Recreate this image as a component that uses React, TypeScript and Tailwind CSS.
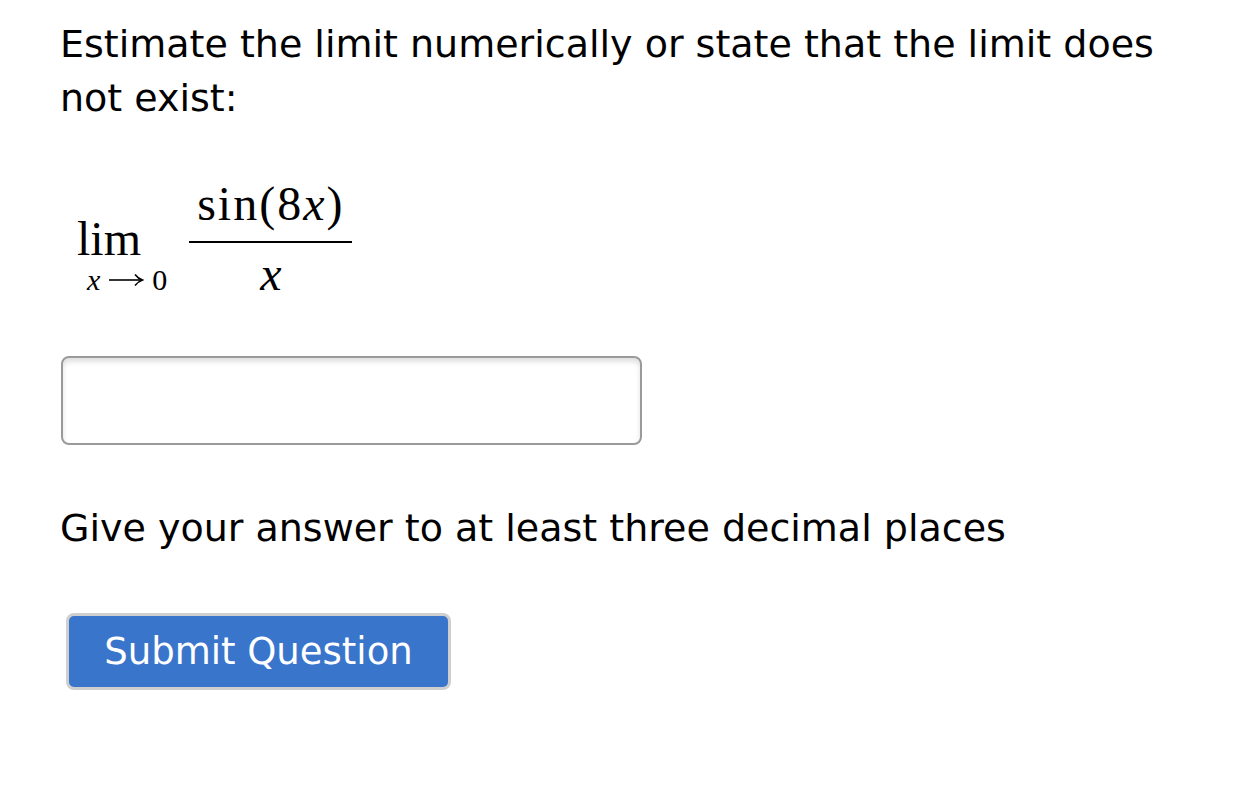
const sans = { fontFamily: '"DejaVu Sans", "Open Sans", sans-serif' };
const serif = { fontFamily: '"Liberation Serif", "DejaVu Serif", serif' };

function Arrow() {
  return (
    <svg width="36" height="16" viewBox="0 0 36 16" className="mx-[8px]">
      <path d="M1 8 H33" stroke="black" strokeWidth="1.6" fill="none" />
      <path d="M27 2.5 Q30 6.5 34.5 8 Q30 9.5 27 13.5" stroke="black" strokeWidth="1.6" fill="none" />
    </svg>
  );
}

export default function App() {
  return (
    <div className="min-h-[800px] w-[1242px] bg-white text-black" style={sans}>
      <div className="pl-[60px] pt-[17px]">
        <p className="w-[1130px] text-[38px] leading-[54px]">
          Estimate the limit numerically or state that the limit does not exist:
        </p>

        <div className="mt-[55px] flex items-start" style={serif}>
          <div className="flex flex-col items-start">
            <span className="ml-[17px] mt-[35px] text-[48px] leading-[48px]">lim</span>
            <span className="ml-[27px] mt-[2px] flex items-center text-[30px] leading-[30px]">
              <i>x</i>
              <Arrow />
              <span>0</span>
            </span>
          </div>
          <div className="ml-[22px] flex w-[163px] flex-col items-center">
            <span className="text-[48px] leading-[48px] tracking-[2px]">
              sin(8<i>x</i>)
            </span>
            <div className="mt-[13px] h-[2px] w-[163px] bg-black" />
            <span className="mt-[7px] text-[48px] leading-[48px]">
              <i>x</i>
            </span>
          </div>
        </div>

        <div className="ml-px mt-[58px] h-[89px] w-[581px] rounded-[8px] border-2 border-[#9a9a9a] bg-white shadow-[inset_0_4px_5px_rgba(0,0,0,0.12)]" />

        <p className="mt-[56px] text-[38px] leading-[54px]">Give your answer to at least three decimal places</p>

        <button className="ml-[6px] mt-[58px] h-[77px] w-[385px] rounded-[8px] border-[3px] border-[#cfcfcf] bg-[#3a75cc] text-[37px] leading-[40px] text-white">
          Submit Question
        </button>
      </div>
    </div>
  );
}
